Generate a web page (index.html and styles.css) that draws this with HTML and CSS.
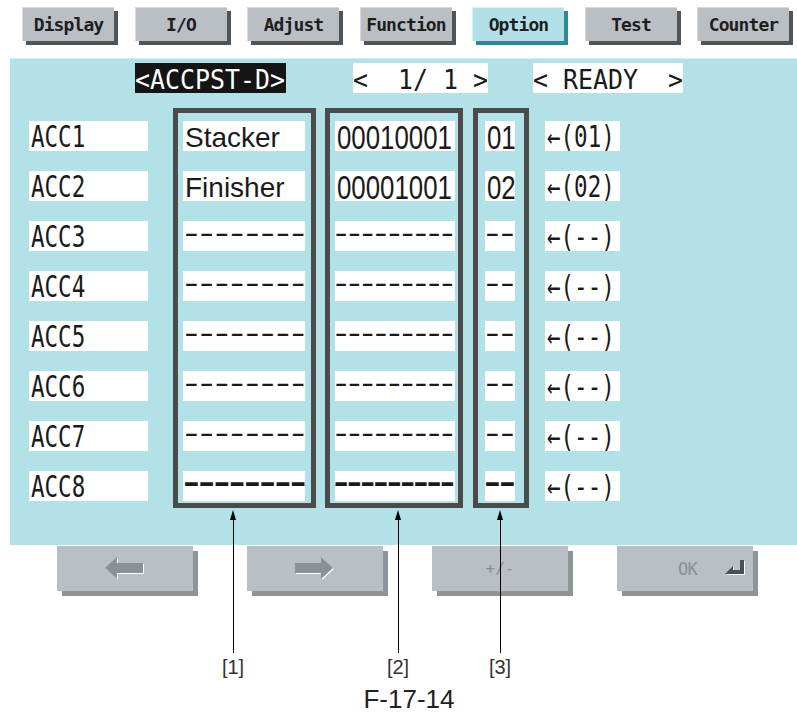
FILE: index.html
```html
<!doctype html>
<html lang="en">
<head>
    <meta charset="utf-8">
    <title>Option - ACCPST-D</title>
    <link rel="stylesheet" href="styles.css">
</head>
<body>
    <div class="figure">
        <div class="tabs">
            <div class="tab">Display</div>
            <div class="tab">I/O</div>
            <div class="tab">Adjust</div>
            <div class="tab">Function</div>
            <div class="tab active">Option</div>
            <div class="tab">Test</div>
            <div class="tab">Counter</div>
        </div>

        <div class="screen">
            <div class="screen-head">
                <div class="field title"><span>&lt;ACCPST-D&gt;</span></div>
                <div class="field page"><span>&lt;  1/ 1 &gt;</span></div>
                <div class="field state"><span>&lt; READY  &gt;</span></div>
            </div>

            <div class="table">
                <div class="col plain col-id">
                    <div class="cell"><span>ACC1</span></div>
                    <div class="cell"><span>ACC2</span></div>
                    <div class="cell"><span>ACC3</span></div>
                    <div class="cell"><span>ACC4</span></div>
                    <div class="cell"><span>ACC5</span></div>
                    <div class="cell"><span>ACC6</span></div>
                    <div class="cell"><span>ACC7</span></div>
                    <div class="cell"><span>ACC8</span></div>
                </div>
                <div class="col frame frame-type">
                    <div class="cell"><span class="name">Stacker</span></div>
                    <div class="cell"><span class="name">Finisher</span></div>
                    <div class="cell"><span class="dash">--------</span></div>
                    <div class="cell"><span class="dash">--------</span></div>
                    <div class="cell"><span class="dash">--------</span></div>
                    <div class="cell"><span class="dash">--------</span></div>
                    <div class="cell"><span class="dash">--------</span></div>
                    <div class="cell"><span class="dash heavy">--------</span></div>
                </div>
                <div class="col frame frame-code">
                    <div class="cell"><span class="num">00010001</span></div>
                    <div class="cell"><span class="num">00001001</span></div>
                    <div class="cell"><span class="dash">---------</span></div>
                    <div class="cell"><span class="dash">---------</span></div>
                    <div class="cell"><span class="dash">---------</span></div>
                    <div class="cell"><span class="dash">---------</span></div>
                    <div class="cell"><span class="dash">---------</span></div>
                    <div class="cell"><span class="dash heavy">---------</span></div>
                </div>
                <div class="col frame frame-no">
                    <div class="cell"><span class="num">01</span></div>
                    <div class="cell"><span class="num">02</span></div>
                    <div class="cell"><span class="dash">--</span></div>
                    <div class="cell"><span class="dash">--</span></div>
                    <div class="cell"><span class="dash">--</span></div>
                    <div class="cell"><span class="dash">--</span></div>
                    <div class="cell"><span class="dash">--</span></div>
                    <div class="cell"><span class="dash heavy">--</span></div>
                </div>
                <div class="col plain col-set">
                    <div class="cell"><span>&larr;(01)</span></div>
                    <div class="cell"><span>&larr;(02)</span></div>
                    <div class="cell"><span>&larr;(--)</span></div>
                    <div class="cell"><span>&larr;(--)</span></div>
                    <div class="cell"><span>&larr;(--)</span></div>
                    <div class="cell"><span>&larr;(--)</span></div>
                    <div class="cell"><span>&larr;(--)</span></div>
                    <div class="cell"><span>&larr;(--)</span></div>
                </div>
            </div>
        </div>

        <div class="keys">
            <div class="key key-prev">
                <svg width="40" height="24" viewBox="0 0 40 24">
                    <polygon points="1,12 13,1 13,7 39,7 39,17 13,17 13,23" fill="#ffffff"/>
                    <polygon points="0,11 12,0 12,6 38,6 38,16 12,16 12,22" fill="#8a9096"/>
                </svg>
            </div>
            <div class="key">
                <svg width="40" height="24" viewBox="0 0 40 24">
                    <polygon points="39,12 27,1 27,7 1,7 1,17 27,17 27,23" fill="#ffffff"/>
                    <polygon points="38,11 26,0 26,6 0,6 0,16 26,16 26,22" fill="#8a9096"/>
                </svg>
            </div>
            <div class="key key-sign">+/-</div>
            <div class="key key-ok">
                <span>OK</span>
                <svg width="21" height="19" viewBox="0 0 21 19">
                    <polygon points="1,16 9,8 9,12 16,12 16,2 20,2 20,16" fill="#ffffff"/>
                    <polygon points="0,15 8,7 8,11 15,11 15,1 19,1 19,15" fill="#4a4f55"/>
                </svg>
            </div>
        </div>

        <div class="callout c1"><div class="tip"></div><div class="stem"></div><div class="tag">[1]</div></div>
        <div class="callout c2"><div class="tip"></div><div class="stem"></div><div class="tag">[2]</div></div>
        <div class="callout c3"><div class="tip"></div><div class="stem"></div><div class="tag">[3]</div></div>

        <p class="caption">F-17-14</p>
    </div>
</body>
</html>
```

FILE: styles.css
```css
body {
    margin: 0;
    background-color: #fff;
    font-family: "Liberation Sans", Arial, sans-serif;
    color: #1a1a1a;
}
.figure {
    position: relative;
    width: 797px;
    height: 713px;
    overflow: hidden;
}

/* top tab bar */
.tabs {
    display: flex;
    gap: 20.5px;
    height: 58px;
    box-sizing: border-box;
    padding: 7px 0 0 22px;
}
.tab {
    width: 92px;
    height: 34px;
    box-sizing: border-box;
    display: flex;
    align-items: center;
    justify-content: center;
    background-color: #babec5;
    border-top: 1px solid #d6d9de;
    border-left: 1px solid #d6d9de;
    box-shadow: 4px 4px 0 #4f5459;
    font: bold 18px "DejaVu Sans Mono", monospace;
    letter-spacing: -0.9px;
    color: #1e1e1e;
}
.tab.active {
    background-color: #b2e0e8;
    border-color: #d8f1f5;
    box-shadow: 4px 4px 0 #2f8796;
}

/* cyan screen */
.screen {
    margin-left: 10px;
    height: 487px;
    box-sizing: border-box;
    padding-top: 4px;
    background-color: #b2e1e8;
    border-top: 1px solid #d2eef2;
}
.screen-head {
    display: flex;
    padding-left: 125px;
}
.field {
    height: 30px;
    background-color: #fff;
    white-space: pre;
    font: 27px/33px "DejaVu Sans Mono", monospace;
}
.field span {
    display: inline-block;
    transform: scaleX(.922);
    transform-origin: 0 50%;
}
.field.title {
    width: 151px;
    background-color: #151515;
    color: #fff;
}
.field.page {
    width: 135px;
    margin-left: 67px;
}
.field.state {
    width: 150px;
    margin-left: 45px;
}

.table {
    display: flex;
    align-items: flex-start;
    margin-top: 15px;
    padding-left: 19px;
}
.col {
    display: flex;
    flex-direction: column;
    gap: 20px;
}
.col.plain {
    padding-top: 13px;
}
.frame {
    border: 5px solid #4b4b4b;
    padding: 8px 6px 2px 5px;
}
.cell {
    display: flex;
    height: 30px;
    background-color: #fff;
    white-space: pre;
}
.cell span {
    transform-origin: 0 50%;
}
.col-id .cell { width: 119px; }
.col-set .cell { width: 75px; }
.col-set { margin-left: 16px; }
.frame-type { margin-left: 25px; }
.frame-type .cell { width: 122px; }
.frame-code { margin-left: 9px; padding-right: 3px; }
.frame-code .cell { width: 120px; }
.frame-no { margin-left: 10px; padding-left: 7px; padding-right: 9px; }
.frame-no .cell { width: 30px; }

.col-id span,
.col-set span {
    margin-left: 2px;
    font: 30px/31px "DejaVu Sans Mono", monospace;
    transform: scaleX(.75);
}
.name {
    margin-left: 2px;
    font-size: 28px;
    line-height: 34px;
}
.num {
    margin-left: 1.5px;
    font-size: 34px;
    line-height: 32px;
    transform: scaleX(.76);
}
.dash {
    font: 26px/24px "DejaVu Sans Mono", monospace;
}
.dash.heavy {
    font-weight: bold;
}
.frame-type .dash {
    margin-left: -4.4px;
    letter-spacing: -6px;
    transform: scaleX(1.58);
}
.frame-code .dash {
    margin-left: -4.6px;
    letter-spacing: -6.3px;
    transform: scaleX(1.42);
}
.frame-no .dash {
    margin-left: -5.4px;
    letter-spacing: -6.15px;
    transform: scaleX(1.58);
}

/* soft keys */
.keys {
    display: flex;
    gap: 49px;
    padding-left: 57px;
    margin-top: 1px;
}
.key {
    width: 136px;
    height: 45px;
    display: flex;
    align-items: center;
    justify-content: center;
    background-color: #babec5;
    box-shadow: 5px 5px 0 #8e9499;
    color: #8a8f95;
    font: 16px "DejaVu Sans Mono", monospace;
}
.key-prev {
    margin-right: 5px;
}
.key-ok {
    justify-content: flex-end;
    box-sizing: border-box;
    padding-right: 7px;
}
.key-ok span {
    font-size: 17px;
    letter-spacing: -0.7px;
}
.key-ok svg {
    margin-left: 28px;
}

/* annotation callouts */
.callout {
    position: absolute;
    top: 510px;
    width: 40px;
    text-align: center;
}
.c1 { left: 213px; }
.c2 { left: 378px; }
.c3 { left: 480px; }
.tip {
    width: 0;
    margin: 0 auto;
    border-left: 3px solid transparent;
    border-right: 3px solid transparent;
    border-bottom: 10px solid #000;
}
.stem {
    width: 1px;
    height: 133px;
    margin: 0 auto;
    background-color: #000;
}
.tag {
    margin-top: 2px;
    font-size: 20px;
    line-height: 24px;
    color: #333;
}
.caption {
    margin: 93px 0 0;
    padding-left: 21px;
    text-align: center;
    font-size: 26px;
    line-height: 30px;
    color: #222;
}
```
